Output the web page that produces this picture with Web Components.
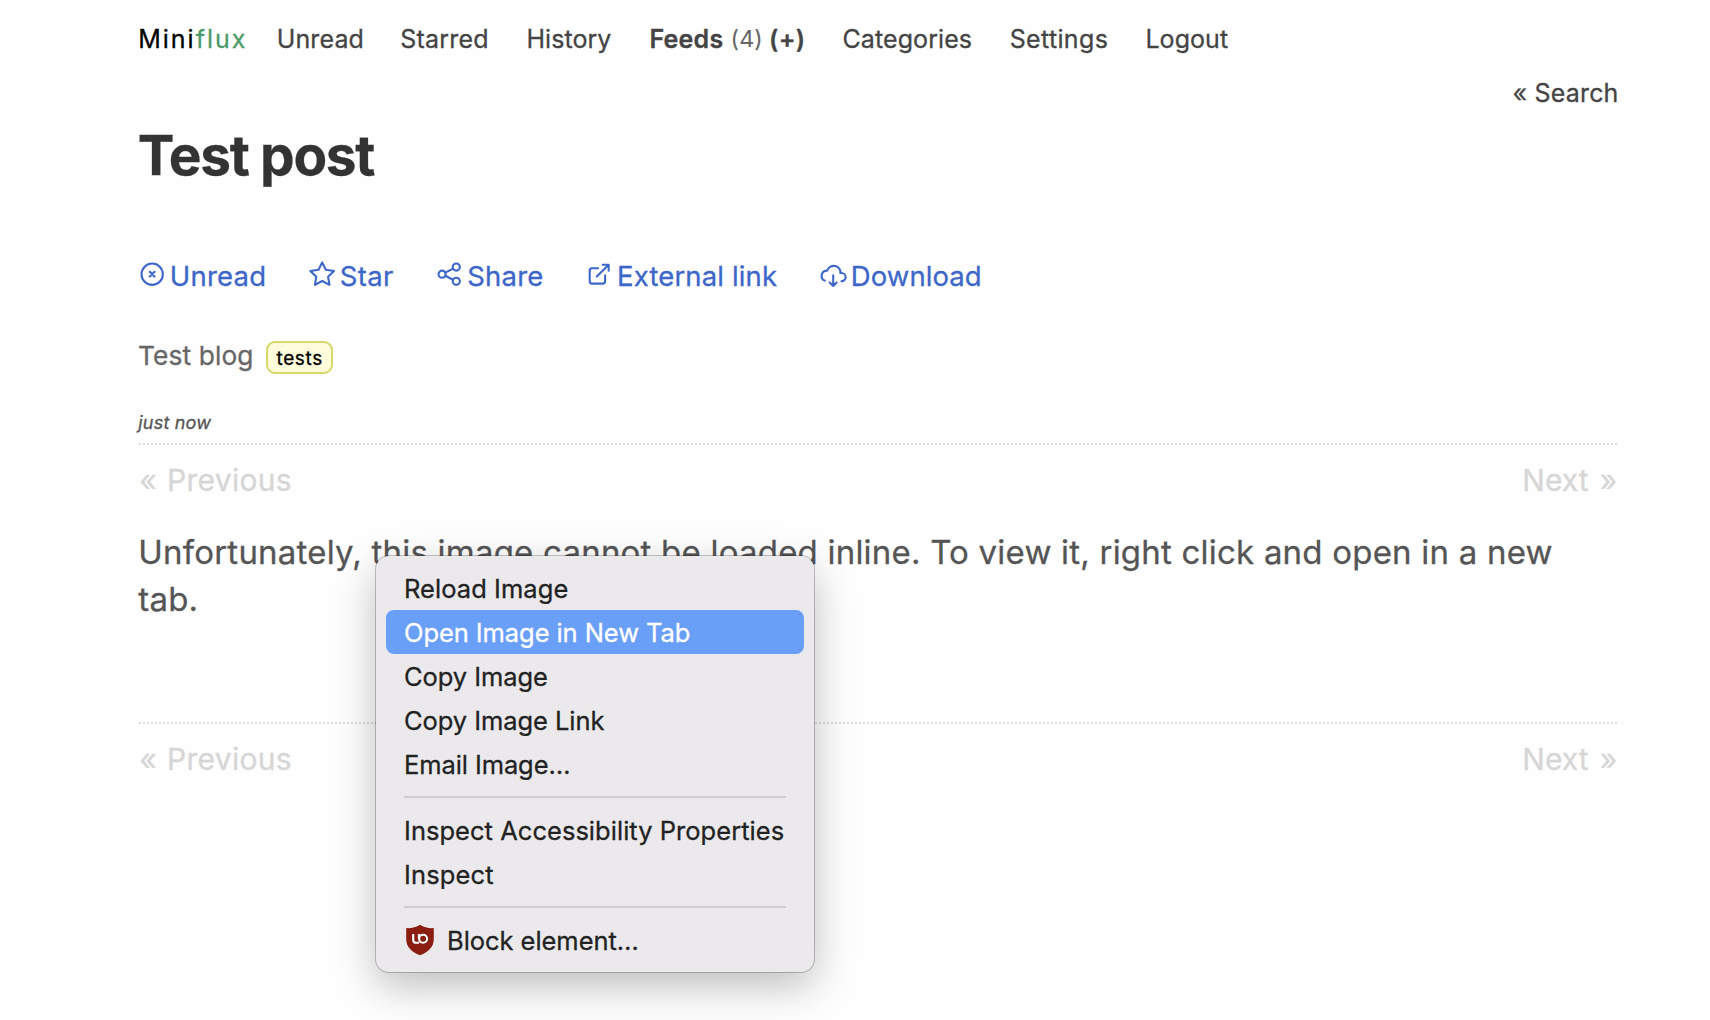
<!DOCTYPE html>
<html lang="en">
<head>
<meta charset="utf-8">
<title>Test post - Miniflux</title>
<style>
html, body { margin: 0; height: 100%; overflow: hidden; background: #fefefe; }
body { font-family: Inter, "Liberation Sans", sans-serif; -webkit-text-stroke: .28px currentColor; }
</style>
</head>
<body>
<reader-app></reader-app>

<template id="tpl-app">
  <style>
    :host { display: block; position: relative; width: 1710px; height: 1020px; overflow: hidden; color: #555; }
    .page { display: flex; flex-direction: column; margin: 0 92px 0 138px; }
    .search { display: flex; justify-content: flex-end; margin: 22px -.6px 0 0; font-size: 25px; line-height: 32px; letter-spacing: .18px; color: #444; }
    h1 { margin: 12.500px 0 .5px -.3px; font-size: 55px; line-height: 66px; font-weight: 700; letter-spacing: -1.35px; color: #333; }
    .actions { display: flex; gap: 41.800px; margin-top: 71px; }
    .meta { display: flex; margin-top: 46px; height: 35px; font-size: 26.300px; line-height: 33px; letter-spacing: .12px; color: #666; }
    .feed-tag { margin: 2px 0 0 12.600px; }
    time { display: block; margin: 37px 0 8px .3px; font-size: 18px; line-height: 24px; font-style: italic; letter-spacing: .2px; color: #555; }
    p { margin: 28.5px 0 0 .3px; height: 193.5px; font-size: 33px; line-height: 47px; letter-spacing: .21px; color: #555; }
    context-menu { position: absolute; left: 376px; top: 556px; }
  </style>
  <div class="page">
    <site-nav></site-nav>
    <div class="search"><span>« Search</span></div>
    <h1>Test post</h1>
    <div class="actions">
      <entry-action icon="unread" style="letter-spacing:.2px">Unread</entry-action>
      <entry-action icon="star" style="letter-spacing:.33px">Star</entry-action>
      <entry-action icon="share" style="letter-spacing:.19px">Share</entry-action>
      <entry-action icon="external" style="letter-spacing:.14px">External link</entry-action>
      <entry-action icon="download" style="letter-spacing:.08px">Download</entry-action>
    </div>
    <div class="meta"><span>Test blog</span><entry-tag class="feed-tag">tests</entry-tag></div>
    <time>just now</time>
    <entry-pager></entry-pager>
    <p>Unfortunately, this image cannot be loaded inline. To view it, right click and open in a new tab.</p>
    <entry-pager></entry-pager>
  </div>
  <context-menu>
    <menu-item style="letter-spacing:.05px">Reload Image</menu-item>
    <menu-item selected style="letter-spacing:-.08px">Open Image in New Tab</menu-item>
    <menu-item style="letter-spacing:-.07px">Copy Image</menu-item>
    <menu-item style="letter-spacing:-.07px">Copy Image Link</menu-item>
    <menu-item style="letter-spacing:-.1px">Email Image…</menu-item>
    <menu-separator></menu-separator>
    <menu-item style="letter-spacing:.03px">Inspect Accessibility Properties</menu-item>
    <menu-item style="letter-spacing:.12px">Inspect</menu-item>
    <menu-separator></menu-separator>
    <menu-item style="letter-spacing:-.05px">
      <svg slot="icon" width="28" height="31" viewBox="0 0 28 31">
        <path d="M14 .3C17.600 3 22.500 3.800 27.800 3.600V14.500C27.800 22.500 22.500 27.300 14 30.800C5.500 27.300 .2 22.500 .2 14.500V3.600C5.500 3.800 10.400 3 14 .3Z" fill="#8a1f11"/>
        <path d="M7.200 9.500V15.200Q7.200 18.300 10 18.300H13.200M12.900 9.500V14.300" fill="none" stroke="#fff" stroke-width="2.100"/>
        <circle cx="17.100" cy="14.300" r="4" fill="none" stroke="#fff" stroke-width="2.100"/>
      </svg>
      Block element…
    </menu-item>
  </context-menu>
</template>

<template id="tpl-nav">
  <style>
    :host { display: flex; margin-top: 23px; height: 32px; font-size: 25px; line-height: 32px; color: #444; white-space: pre; }
    .logo { color: #000; letter-spacing: 2px; margin-left: .2px; }
    .logo b { font-weight: 400; color: #4c9a68; }
    .active { font-weight: 600; display: flex; }
    .count { font-size: 23.300px; font-weight: 400; color: #666; margin: 0 6.200px 0 7.200px; letter-spacing: .1px; -webkit-text-stroke: 0; }
  </style>
  <span class="logo">Mini<b>flux</b></span>
  <nav-link style="margin-left:29.400px;letter-spacing:.1px">Unread</nav-link>
  <nav-link style="margin-left:36.400px;letter-spacing:.2px">Starred</nav-link>
  <nav-link style="margin-left:37.600px;letter-spacing:.06px">History</nav-link>
  <div class="active" style="margin-left:38.100px;letter-spacing:.21px"><nav-link>Feeds</nav-link><span class="count">(4)</span><nav-link>(+)</nav-link></div>
  <nav-link style="margin-left:37.300px;letter-spacing:.09px">Categories</nav-link>
  <nav-link style="margin-left:37.500px;letter-spacing:.35px">Settings</nav-link>
  <nav-link style="margin-left:37.200px;letter-spacing:.07px">Logout</nav-link>
</template>

<template id="tpl-nav-link"><style>:host { display: block; }</style><slot></slot></template>

<template id="tpl-action">
  <style>
    :host { display: flex; gap: 3.400px; height: 34px; font-size: 27.5px; line-height: 34px; color: #3c66c8; white-space: nowrap; }
    svg { width: 28.400px; height: 28.400px; margin-top: 1.200px; fill: none; stroke: currentColor; stroke-width: 1.750; stroke-linecap: round; stroke-linejoin: round; flex: none; }
  </style>
  <svg viewBox="0 0 24 24"></svg><span><slot></slot></span>
</template>

<template id="tpl-tag">
  <style>
    :host { display: block; box-sizing: border-box; width: 67px; height: 33px; border: 2px solid #d6d868; border-radius: 9px; background: #fffcdb; color: #000; font-size: 19px; line-height: 31px; text-align: center; letter-spacing: .6px; }
  </style>
  <slot></slot>
</template>

<template id="tpl-pager">
  <style>
    :host { display: block; height: 57px; }
    .rule { height: 2px; margin-left: 1px; background: repeating-linear-gradient(90deg, #ddd 0 2px, transparent 2px 4px); }
    .links { display: flex; justify-content: space-between; margin: 15px .8px 0 1.200px; font-size: 30px; line-height: 40px; color: #d6d6d6; letter-spacing: .3px; }
    .prev { word-spacing: 1.300px; }
    .next { word-spacing: 2.500px; letter-spacing: .05px; }
  </style>
  <div class="rule"></div>
  <div class="links"><span class="prev">« Previous</span><span class="next">Next »</span></div>
</template>

<template id="tpl-menu">
  <style>
    :host { display: flex; flex-direction: column; box-sizing: border-box; width: 438px; height: 416px; padding: 10px 10px; border-radius: 13px; background: #ebe9ec; color: #222; box-shadow: 0 0 0 1px rgba(0,0,0,.22), 0 14px 42px rgba(0,0,0,.26); }
  </style>
  <slot></slot>
</template>

<template id="tpl-menu-item">
  <style>
    :host { display: flex; align-items: center; box-sizing: border-box; flex: none; height: 44px; padding-left: 18px; border-radius: 8px; font-size: 25.5px; line-height: 42px; white-space: nowrap; }
    :host([selected]) { background: #6a9ff8; color: #fff; }
    span { padding-top: 2px; }
    ::slotted(svg) { margin: 0 13px 0 2px; transform: translateY(-.5px); }
  </style>
  <slot name="icon"></slot><span><slot></slot></span>
</template>

<template id="tpl-separator">
  <style>
    :host { display: block; flex: none; height: 2px; margin: 10px 18px; background: #cfcdd0; }
  </style>
</template>

<script>
const stamp = (host, id) => {
  const root = host.attachShadow({ mode: "open" });
  root.append(document.getElementById(id).content.cloneNode(true));
  return root;
};

const ICONS = {
  unread: '<circle cx="12" cy="12" r="9"/><path d="M10 10l4 4m0-4l-4 4"/>',
  star: '<path d="M12 17.750l-6.172 3.245l1.179-6.873l-5-4.867l6.900-1l3.086-6.253l3.086 6.253l6.900 1l-5 4.867l1.179 6.873z"/>',
  share: '<circle cx="6" cy="12" r="3"/><circle cx="18" cy="6" r="3"/><circle cx="18" cy="18" r="3"/><path d="M8.700 10.700l6.600-3.400M8.700 13.300l6.600 3.400"/>',
  external: '<path d="M11 7H6a2 2 0 0 0-2 2v9a2 2 0 0 0 2 2h9a2 2 0 0 0 2-2v-5M10 14L20 4M15 4h5v5"/>',
  download: '<path d="M19 18a3.500 3.500 0 0 0 0-7h-1a5 4.500 0 0 0-11-2a4.600 4.400 0 0 0-2.100 8.400M12 13v9M9 19l3 3l3-3"/>'
};

class EntryAction extends HTMLElement {
  constructor() {
    super();
    this.root = stamp(this, "tpl-action");
  }
  connectedCallback() {
    this.root.querySelector("svg").innerHTML = ICONS[this.getAttribute("icon")];
  }
}
customElements.define("entry-action", EntryAction);

const simple = {
  "nav-link": "tpl-nav-link",
  "site-nav": "tpl-nav",
  "entry-tag": "tpl-tag",
  "entry-pager": "tpl-pager",
  "menu-item": "tpl-menu-item",
  "menu-separator": "tpl-separator",
  "context-menu": "tpl-menu",
  "reader-app": "tpl-app"
};
for (const [name, id] of Object.entries(simple)) {
  customElements.define(name, class extends HTMLElement {
    constructor() {
      super();
      stamp(this, id);
    }
  });
}
</script>
</body>
</html>
